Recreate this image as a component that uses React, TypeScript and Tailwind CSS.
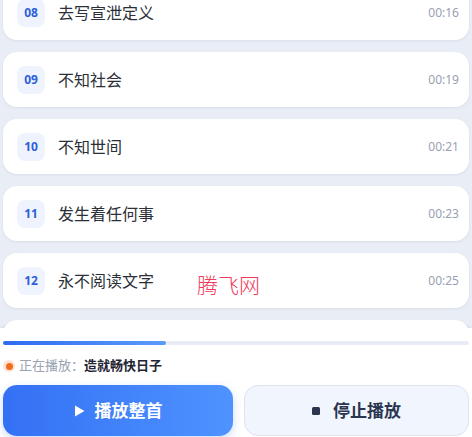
import * as React from "react";

type Track = { no: string; title: string; time: string };

const tracks: Track[] = [
  { no: "08", title: "去写宣泄定义", time: "00:16" },
  { no: "09", title: "不知社会", time: "00:19" },
  { no: "10", title: "不知世间", time: "00:21" },
  { no: "11", title: "发生着任何事", time: "00:23" },
  { no: "12", title: "永不阅读文字", time: "00:25" },
];

const font = { fontFamily: '"Noto Sans", "Noto Sans CJK SC", sans-serif' };

function TrackRow({ t }: { t: Track }) {
  return (
    <div className="flex h-[55px] shrink-0 items-center rounded-[14px] bg-white pl-[14px] pr-[10px] shadow-[0_1px_3px_rgba(30,50,100,0.08)]">
      <span className="flex size-[28px] items-center justify-center rounded-[8px] bg-[#eef3fe] text-[12px] font-bold text-[#2d5fd8]">
        {t.no}
      </span>
      <span className="ml-[13px] flex-1 text-[16px] text-[#2b2f38]">{t.title}</span>
      <span className="text-[12px] text-[#98a1b3]">{t.time}</span>
    </div>
  );
}

export default function App() {
  return (
    <div className="relative flex h-[437px] w-[472px] flex-col overflow-hidden bg-[#e9edf5]" style={font}>
      <div className="relative h-[328px] overflow-hidden px-[3px]">
        <div className="-mt-[15px] flex flex-col gap-[12px]">
          {tracks.map((t) => (
            <TrackRow key={t.no} t={t} />
          ))}
          {/* next row, scrolled under the player panel */}
          <div className="h-[55px] shrink-0 rounded-[14px] bg-white shadow-[0_1px_3px_rgba(30,50,100,0.08)]" />
        </div>
        <span className="absolute left-[197px] top-[271px] text-[21px] font-light leading-[28px] text-[#ef3a5d]">
          腾飞网
        </span>
      </div>

      <div className="flex flex-1 flex-col bg-white px-[3px] shadow-[0_-1px_4px_rgba(30,50,100,0.08)]">
        <div className="mt-[13px] h-[4px] w-full rounded-full bg-[#e8ecf5]">
          <div className="h-full w-[163px] rounded-full bg-gradient-to-r from-[#2f6bf2] to-[#5b9bff]" />
        </div>
        <div className="mt-[12px] flex h-[18px] items-center text-[13px]">
          <span className="flex size-[12px] items-center justify-center rounded-full bg-[#fde3d2]">
            <span className="size-[7px] rounded-full bg-[#f26b1d]" />
          </span>
          <span className="ml-[4px] text-[#9aa2b1]">正在播放：</span>
          <span className="font-bold text-[#1f2533]">造就畅快日子</span>
        </div>
        <div className="mt-[10px] flex gap-[11px]">
          <button
            type="button"
            className="flex h-[51px] w-[230px] items-center justify-center gap-[10px] rounded-[14px] bg-gradient-to-r from-[#3470f4] to-[#4f93ff] text-[17px] font-bold text-white shadow-[0_3px_8px_rgba(52,112,244,0.25)]"
          >
            <svg width="11" height="12" viewBox="0 0 11 12" aria-hidden>
              <path d="M1 0.5 L10.5 6 L1 11.5 Z" fill="white" />
            </svg>
            播放整首
          </button>
          <button
            type="button"
            className="flex h-[51px] flex-1 items-center justify-center gap-[13px] rounded-[14px] border border-[#dde4f0] bg-[#f1f5fd] text-[17px] font-bold text-[#2b3550]"
          >
            <span className="size-[8px] rounded-[1.5px] bg-[#2b3550]" />
            停止播放
          </button>
        </div>
      </div>
    </div>
  );
}
